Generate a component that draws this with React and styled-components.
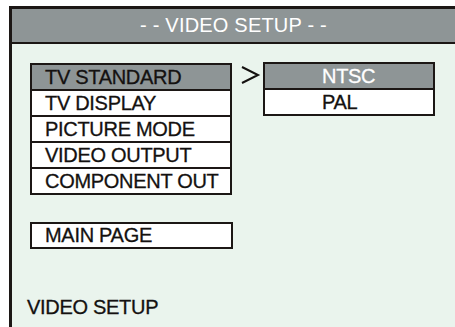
import React from 'react'
import styled, { createGlobalStyle } from 'styled-components'

const GlobalStyle = createGlobalStyle`
  html, body {
    margin: 0;
    padding: 0;
    background: #ffffff;
    overflow: hidden;
  }
  body {
    font-family: "Liberation Sans", Arial, sans-serif;
  }
`

const FrameStyled = styled.div`
  margin: 6px 0 0 9px;
  width: 443px;
  height: 318px;
  border-top: 3px solid #1c1715;
  border-left: 3px solid #1c1715;
  background: #eaf4ed;
  display: flex;
  flex-direction: column;
`

const HeaderStyled = styled.div`
  height: 33px;
  flex: none;
  background: #8e9596;
  border-bottom: 2px solid #1c1715;

  display: flex;
  align-items: center;
  justify-content: center;

  color: #ffffff;
  font-size: 20px;
  letter-spacing: 0.2px;
`

const ContentStyled = styled.div`
  padding: 19px 0 0 18px;
  display: flex;
  flex-direction: column;
`

const MenuAreaStyled = styled.div`
  display: flex;
  flex-direction: row;
  align-items: flex-start;
`

const ListStyled = styled.ul`
  list-style: none;
  margin: 0;
  padding: 0;
  width: ${props => props.width}px;
  border: 2px solid #1c1715;
  box-sizing: border-box;
  margin-top: ${props => props.offset || 0}px;
`

const ItemStyled = styled.li`
  height: 24px;
  box-sizing: border-box;
  display: flex;
  align-items: center;
  padding-left: ${props => props.indent}px;

  background: ${props => (props.active ? '#8e9596' : '#ffffff')};
  color: ${props => (props.light ? '#ffffff' : '#141110')};
  font-size: 20px;
  letter-spacing: -0.3px;
  -webkit-text-stroke: 0.3px ${props => (props.light ? '#ffffff' : '#141110')};
  white-space: nowrap;

  &:not(:last-child) {
    border-bottom: 2px solid #1c1715;
    height: 26px;
  }
`

const ArrowStyled = styled.svg`
  width: 31px;
  height: 26px;
  flex: none;
`

const MainPageStyled = styled.div`
  margin-top: 27px;
  width: 203px;
  height: 27px;
  box-sizing: border-box;
  border: 2px solid #1c1715;
  background: #ffffff;
  display: flex;
  align-items: center;
  padding-left: 13px;

  color: #141110;
  font-size: 20px;
  letter-spacing: -0.3px;
  -webkit-text-stroke: 0.3px #141110;
`

const StatusStyled = styled.div`
  margin: 47px 0 0 -3px;
  color: #141110;
  font-size: 20px;
  letter-spacing: -0.3px;
  -webkit-text-stroke: 0.3px #141110;
`

const menuItems = ['TV STANDARD', 'TV DISPLAY', 'PICTURE MODE', 'VIDEO OUTPUT', 'COMPONENT OUT']
const options = ['NTSC', 'PAL']

export default () => (
  <>
    <GlobalStyle />
    <FrameStyled>
      <HeaderStyled>- - VIDEO SETUP - -</HeaderStyled>
      <ContentStyled>
        <MenuAreaStyled>
          <ListStyled width={202}>
            {menuItems.map((item, i) => (
              <ItemStyled key={i} indent={13} active={i === 0}>{item}</ItemStyled>
            ))}
          </ListStyled>
          <ArrowStyled viewBox="0 0 31 26">
            <polyline points="10,4 26,12 10,20" fill="none" stroke="#141110" strokeWidth="2" />
          </ArrowStyled>
          <ListStyled width={172} offset={-1}>
            {options.map((opt, i) => (
              <ItemStyled key={i} indent={57} active={i === 0} light={i === 0}>{opt}</ItemStyled>
            ))}
          </ListStyled>
        </MenuAreaStyled>
        <MainPageStyled>MAIN PAGE</MainPageStyled>
        <StatusStyled>VIDEO SETUP</StatusStyled>
      </ContentStyled>
    </FrameStyled>
  </>
)
